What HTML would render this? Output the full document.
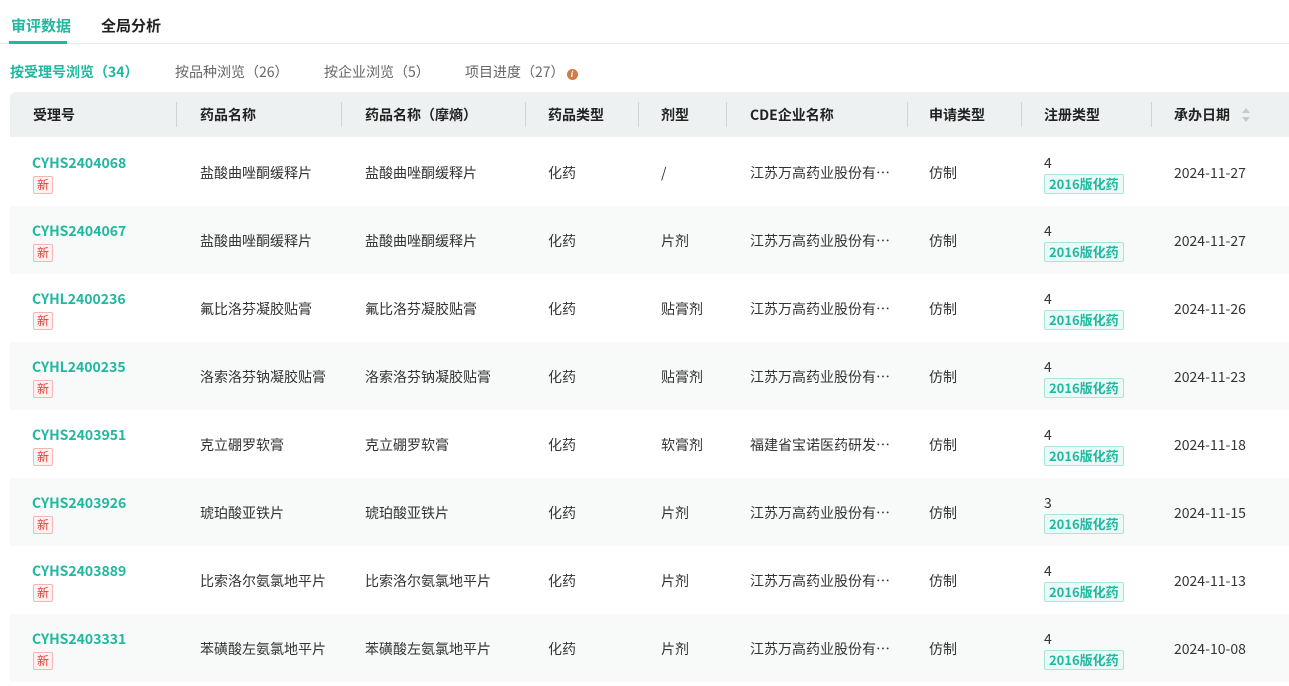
<!DOCTYPE html>
<html><head><meta charset="utf-8"><style>
body{margin:0;width:1289px;height:686px;overflow:hidden;background:#fff;font-family:"Noto Sans CJK SC","Liberation Sans",sans-serif;color:#333;font-size:14px;line-height:20px}
.tabs{position:absolute;left:0;top:0;width:1289px;height:43px;border-bottom:1px solid #e6e8ea}
.tab{position:absolute;top:16px;font-size:15px;font-weight:bold;color:#222}
.tab.a{color:#1fb8a0}
.ul{position:absolute;left:9px;top:41px;width:58px;height:3px;background:#1fb8a0}
.sub{position:absolute;top:62px;font-size:14px;color:#666}
.sub.a{color:#1fb8a0;font-weight:bold}
.info{display:inline-block;width:11px;height:11px;border-radius:50%;background:#d07a45;color:#fff;font-size:9px;line-height:11px;text-align:center;font-style:italic;font-weight:bold;vertical-align:0px;margin-left:2px;font-family:"Liberation Serif",serif}
.head{position:absolute;left:10px;top:92px;width:1290px;height:45px;background:#eef1f2;border-radius:6px 0 0 0}
.h{position:absolute;top:13px;font-weight:bold;color:#222;font-size:14px}
.sep{position:absolute;top:10px;width:1px;height:25px;background:#cfd4d6}
.row{position:absolute;left:10px;width:1290px;height:68px}
.row.s{background:#f8f9f9}
.c{position:absolute;top:25px;white-space:nowrap}
.id{position:absolute;left:22px;top:15px;color:#1fb8a0;font-weight:bold}
.new{position:absolute;left:23px;top:38px;width:20px;height:18px;border:1px solid #f5b5b5;background:#fff1f1;color:#e53c3c;font-size:12px;line-height:16px;text-align:center;border-radius:2px;box-sizing:border-box}
.n{position:absolute;left:1034px;top:15px}
.tag{position:absolute;left:1034px;top:36px;height:20px;padding:0 4px;border:1px solid #a8e6d8;background:#eafaf6;color:#1fb8a0;font-weight:bold;font-size:13px;line-height:18px;border-radius:2px;box-sizing:border-box}
</style></head><body>
<div class="tabs"><span class="tab a" style="left:11px">审评数据</span><span class="tab" style="left:101px">全局分析</span><div class="ul"></div></div>
<span class="sub a" style="left:10px">按受理号浏览（34）</span>
<span class="sub" style="left:175px">按品种浏览（26）</span>
<span class="sub" style="left:324px">按企业浏览（5）</span>
<span class="sub" style="left:465px">项目进度（27）<span class="info">i</span></span>
<div class="head">
<span class="h" style="left:23px">受理号</span><div class="sep" style="left:166px"></div>
<span class="h" style="left:190px">药品名称</span><div class="sep" style="left:331px"></div>
<span class="h" style="left:355px">药品名称（摩熵）</span><div class="sep" style="left:515px"></div>
<span class="h" style="left:538px">药品类型</span><div class="sep" style="left:628px"></div>
<span class="h" style="left:651px">剂型</span><div class="sep" style="left:716px"></div>
<span class="h" style="left:740px">CDE企业名称</span><div class="sep" style="left:897px"></div>
<span class="h" style="left:919px">申请类型</span><div class="sep" style="left:1011px"></div>
<span class="h" style="left:1034px">注册类型</span><div class="sep" style="left:1141px"></div>
<span class="h" style="left:1164px">承办日期</span>
<svg style="position:absolute;left:1231px;top:15px" width="10" height="16"><path d="M1 6L5 1L9 6Z" fill="#c5cacd"/><path d="M1 10L5 15L9 10Z" fill="#c5cacd"/></svg>
</div>
<div id="rows"></div>
<script>
var d=[["CYHS2404068","盐酸曲唑酮缓释片","/","江苏万高药业股份有…","4","2024-11-27"],
["CYHS2404067","盐酸曲唑酮缓释片","片剂","江苏万高药业股份有…","4","2024-11-27"],
["CYHL2400236","氟比洛芬凝胶贴膏","贴膏剂","江苏万高药业股份有…","4","2024-11-26"],
["CYHL2400235","洛索洛芬钠凝胶贴膏","贴膏剂","江苏万高药业股份有…","4","2024-11-23"],
["CYHS2403951","克立硼罗软膏","软膏剂","福建省宝诺医药研发…","4","2024-11-18"],
["CYHS2403926","琥珀酸亚铁片","片剂","江苏万高药业股份有…","3","2024-11-15"],
["CYHS2403889","比索洛尔氨氯地平片","片剂","江苏万高药业股份有…","4","2024-11-13"],
["CYHS2403331","苯磺酸左氨氯地平片","片剂","江苏万高药业股份有…","4","2024-10-08"]];
var h="";d.forEach(function(r,i){h+='<div class="row'+(i%2?' s':'')+'" style="top:'+(138+i*68)+'px"><span class="id">'+r[0]+'</span><span class="new">新</span><span class="c" style="left:190px">'+r[1]+'</span><span class="c" style="left:355px">'+r[1]+'</span><span class="c" style="left:538px">化药</span><span class="c" style="left:651px">'+r[2]+'</span><span class="c" style="left:740px">'+r[3]+'</span><span class="c" style="left:919px">仿制</span><span class="n">'+r[4]+'</span><span class="tag">2016版化药</span><span class="c" style="left:1164px">'+r[5]+'</span></div>'});
document.getElementById("rows").innerHTML=h;
</script>
</body></html>
